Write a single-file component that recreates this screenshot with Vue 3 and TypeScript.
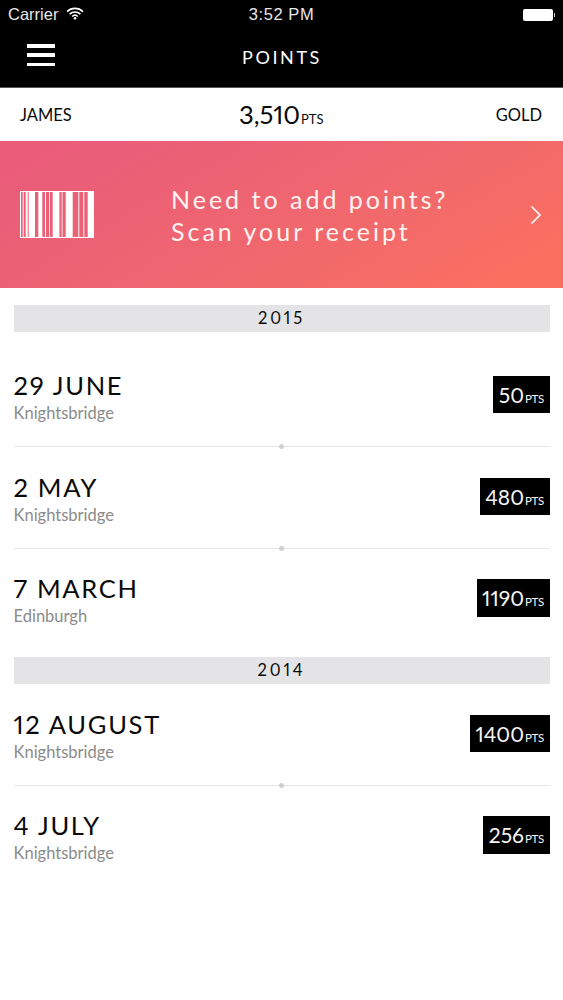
<script setup lang="ts">
interface Entry { date: string; place: string; pts: number }
interface Group { year: string; entries: Entry[] }
const groups: Group[] = [
  { year: '2015', entries: [
    { date: '29 JUNE', place: 'Knightsbridge', pts: 50 },
    { date: '2 MAY', place: 'Knightsbridge', pts: 480 },
    { date: '7 MARCH', place: 'Edinburgh', pts: 1190 },
  ] },
  { year: '2014', entries: [
    { date: '12 AUGUST', place: 'Knightsbridge', pts: 1400 },
    { date: '4 JULY', place: 'Knightsbridge', pts: 256 },
  ] },
]
const bars: [number, number][] = [[0,1],[2.7,1],[5.7,2],[8.7,6.3],[18.3,4],[25,1],[29,0.8],[32.7,6.7],[41.7,0.8],[45.7,7],[58.3,1],[63.3,1],[67.7,5.6]]
</script>

<template>
  <div class="screen">
    <div class="top">
      <div class="status">
        <div class="carrier">Carrier
          <svg class="wifi" width="18" height="13" viewBox="0 0 17 12"><path d="M1 4.2a10.8 10.8 0 0 1 15 0M3.4 6.6a7.4 7.4 0 0 1 10.2 0M5.8 8.8a4 4 0 0 1 5.4 0" fill="none" stroke="#fff" stroke-width="1.5"/><circle cx="8.5" cy="10.6" r="1.2" fill="#fff"/></svg>
        </div>
        <div class="time">3:52 PM</div>
        <div class="battery"><span class="cell"></span><span class="nub"></span></div>
      </div>
      <div class="nav">
        <div class="burger"><span></span><span></span><span></span></div>
        <div class="title">POINTS</div>
      </div>
    </div>
    <div class="info">
      <span class="who">JAMES</span>
      <span class="total">3,510<small>PTS</small></span>
      <span class="who">GOLD</span>
    </div>
    <div class="banner">
      <svg class="barcode" width="74" height="47" viewBox="0 0 74 47">
        <rect x="0.5" y="0.5" width="73" height="46" fill="none" stroke="#fff" stroke-width="1"/>
        <rect v-for="b in bars" :key="b[0]" :x="b[0]" y="0" :width="b[1]" height="47" fill="#fff"/>
      </svg>
      <div class="cta">Need to add points?<br>Scan your receipt</div>
      <svg class="chev" width="12" height="20" viewBox="0 0 12 20"><path d="M1.500 1.500 10 10l-8.500 8.500" fill="none" stroke="#fff" stroke-width="1.600"/></svg>
    </div>
    <section v-for="(g, gi) in groups" :key="g.year" class="group" :class="{ later: gi > 0 }">
      <div class="year">{{ g.year }}</div>
      <div v-for="(e, i) in g.entries" :key="e.date" class="row" :class="{ ruled: i < g.entries.length - 1 }">
        <div class="txt">
          <div class="date">{{ e.date }}</div>
          <div class="place">{{ e.place }}</div>
        </div>
        <div class="badge">{{ e.pts }}<small>PTS</small></div>
      </div>
    </section>
  </div>
</template>

<style>
html, body { margin: 0; background: #fff; }
</style>

<style scoped>
.screen { width: 563px; height: 1000px; background: #fff; overflow: hidden; font-family: "Lato", "Liberation Sans", sans-serif; color: #0a0a0a; font-variant-numeric: proportional-nums; }
.top { background: #000; color: #fff; height: 87px; }
.status { height: 29px; display: grid; grid-template-columns: 1fr auto 1fr; align-items: center; padding: 0 8px 0 8px; font-family: "Liberation Sans", sans-serif; font-size: 16.500px; color: #e8e8e8; }
.carrier { display: flex; align-items: center; gap: 8px; }
.wifi { margin-top: -3px; }
.time { letter-spacing: 0.600px; }
.battery { justify-self: end; display: flex; align-items: center; }
.cell { width: 30px; height: 12px; background: #fff; border-radius: 2px; }
.nub { width: 1.500px; height: 4px; background: #ccc; margin-left: 1px; }
.nav { position: relative; height: 58px; display: flex; align-items: center; justify-content: center; }
.burger { position: absolute; left: 27px; top: 15px; width: 28px; height: 22px; display: flex; flex-direction: column; justify-content: space-between; }
.burger span { height: 3.500px; background: #fff; display: block; }
.title { font-size: 18px; letter-spacing: 2.600px; margin-top: -2px; margin-right: -1px; }
.info { height: 54px; display: flex; align-items: center; justify-content: space-between; padding: 0 21px 0 20px; box-sizing: border-box; border-top: 1px solid #555; }
.who { font-size: 16.500px; }
.total { font-size: 25.500px; margin-left: -5px; margin-top: -2px; }
.total small { font-family: "Liberation Sans Narrow", "Lato", sans-serif; font-size: 13px; margin-left: 1px; }
.banner { height: 147px; display: flex; align-items: center; padding: 0 21px 0 20px; box-sizing: border-box; background: linear-gradient(150deg, #ea5c7a 8%, #ef6670 50%, #fa705f 95%); color: #fff; }
.barcode { flex: none; }
.cta { flex: 1; margin-left: 77px; font-size: 25px; line-height: 32px; letter-spacing: 3px; color: #fff3f0; }
.chev { flex: none; }
.group { padding: 17px 13.500px 0; }
.group.later { padding-top: 8px; }
.year { height: 27px; line-height: 27px; background: #e4e4e6; text-align: center; font-size: 16.500px; letter-spacing: 2.800px; box-sizing: border-box; }
.group:first-of-type .year { margin-bottom: 13px; }
.row { position: relative; height: 100px; display: flex; justify-content: space-between; align-items: center; box-sizing: border-box; }
.ruled { height: 102px; border-bottom: 1px solid #e6e6e6; }
.ruled::after { content: ""; position: absolute; left: 50%; bottom: -3px; width: 5px; height: 5px; margin-left: -3px; border-radius: 50%; background: #cfcfcf; }
.txt { margin-top: 3px; }
.date { font-size: 25.500px; line-height: 30px; letter-spacing: 1.700px; }
.place { font-size: 16.500px; line-height: 24px; margin-top: 1px; color: #8b8b8b; }
.badge { background: #000; color: #f4f4f4; height: 37.500px; line-height: 37px; padding: 0 5.500px; margin-top: -2px; font-size: 21px; box-sizing: border-box; }
.badge small { font-family: "Liberation Sans Narrow", "Lato", sans-serif; font-size: 11.500px; letter-spacing: -0.300px; margin-left: 1px; }
</style>
